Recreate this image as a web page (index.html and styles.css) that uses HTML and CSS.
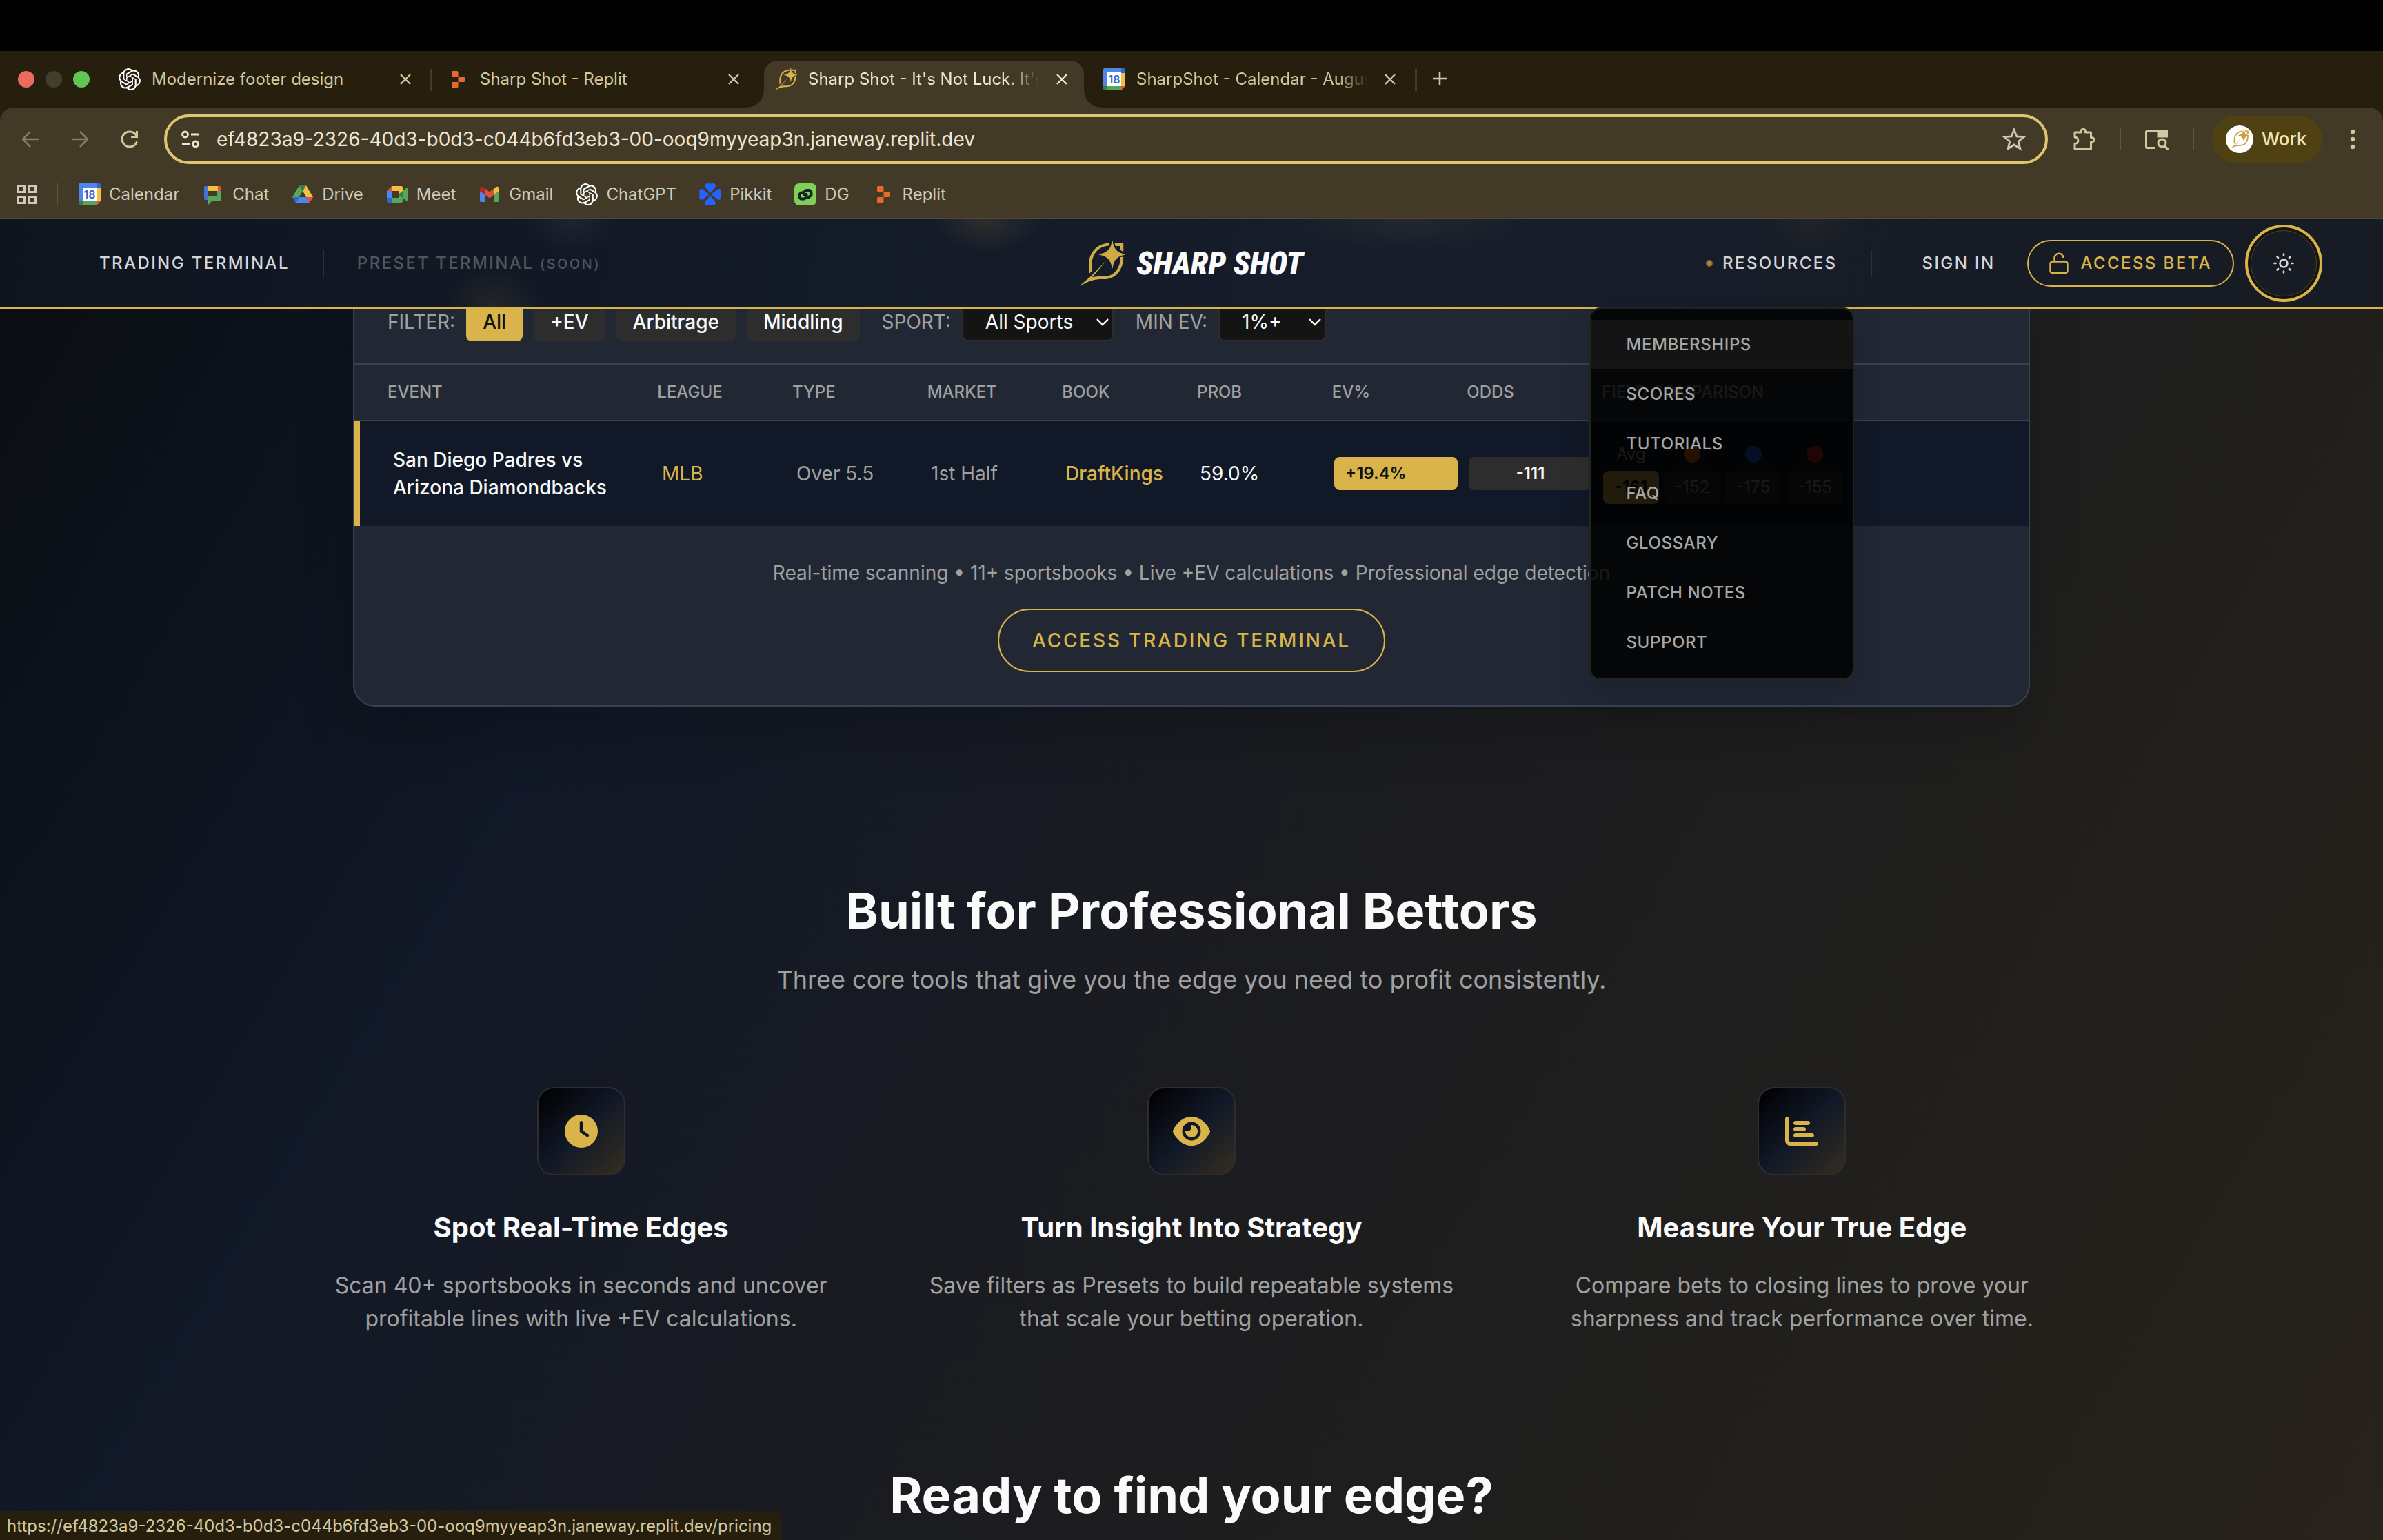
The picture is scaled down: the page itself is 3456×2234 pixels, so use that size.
FILE: index.html
```html
<!DOCTYPE html>
<html lang="en">
<head>
<meta charset="utf-8">
<meta name="viewport" content="width=device-width, initial-scale=1">
<title>Sharp Shot - It's Not Luck. It's Sharp.</title>
<link rel="stylesheet" href="styles.css">
</head>
<body>
<svg class="symbols" aria-hidden="true">
  <symbol id="i-close" viewBox="0 0 16 16"><path d="M1 1 15 15M15 1 1 15" fill="none" stroke="currentColor" stroke-width="2.4"/></symbol>
  <symbol id="i-gpt" viewBox="0 0 24 24"><path fill="#fff" d="M22.2819 9.8211a5.9847 5.9847 0 0 0-.5157-4.9108 6.0462 6.0462 0 0 0-6.5098-2.9A6.0651 6.0651 0 0 0 4.9807 4.1818a5.9847 5.9847 0 0 0-3.9977 2.9 6.0462 6.0462 0 0 0 .7427 7.0966 5.98 5.98 0 0 0 .511 4.9107 6.051 6.051 0 0 0 6.5146 2.9001A5.9847 5.9847 0 0 0 13.2599 24a6.0557 6.0557 0 0 0 5.7718-4.2058 5.9894 5.9894 0 0 0 3.9977-2.9001 6.0557 6.0557 0 0 0-.7475-7.0729zm-9.022 12.6081a4.4755 4.4755 0 0 1-2.8764-1.0408l.1419-.0804 4.7783-2.7582a.7948.7948 0 0 0 .3927-.6813v-6.7369l2.02 1.1686a.071.071 0 0 1 .038.052v5.5826a4.504 4.504 0 0 1-4.4945 4.4944zm-9.6607-4.1254a4.4708 4.4708 0 0 1-.5346-3.0137l.142.0852 4.783 2.7582a.7712.7712 0 0 0 .7806 0l5.8428-3.3685v2.3324a.0804.0804 0 0 1-.0332.0615L9.74 19.9502a4.4992 4.4992 0 0 1-6.1408-1.6464zM2.3408 7.8956a4.485 4.485 0 0 1 2.3655-1.9728V11.6a.7664.7664 0 0 0 .3879.6765l5.8144 3.3543-2.0201 1.1685a.0757.0757 0 0 1-.071 0l-4.8303-2.7865A4.504 4.504 0 0 1 2.3408 7.872zm16.5963 3.8558L13.1038 8.364 15.1192 7.2a.0757.0757 0 0 1 .071 0l4.8303 2.7913a4.4944 4.4944 0 0 1-.6765 8.1042v-5.6772a.79.79 0 0 0-.407-.667zm2.0107-3.0231l-.142-.0852-4.7735-2.7818a.7759.7759 0 0 0-.7854 0L9.409 9.2297V6.8974a.0662.0662 0 0 1 .0284-.0615l4.8303-2.7866a4.4992 4.4992 0 0 1 6.6802 4.66zM8.3065 12.863l-2.02-1.1638a.0804.0804 0 0 1-.038-.0567V6.0742a4.4992 4.4992 0 0 1 7.3757-3.4537l-.142.0805L8.704 5.459a.7948.7948 0 0 0-.3927.6813zm1.0976-2.3654l2.602-1.4998 2.6069 1.4998v2.9994l-2.5974 1.4997-2.6067-1.4997Z"/></symbol>
  <symbol id="i-replit" viewBox="0 0 32 32"><path fill="#e56a2b" d="M7 5.500a1.500 1.500 0 0 1 1.500-1.500H15a1.500 1.500 0 0 1 1.500 1.500V12H8.500A1.500 1.500 0 0 1 7 10.500ZM16.500 12H24.500A1.500 1.500 0 0 1 26 13.500V18.500A1.500 1.500 0 0 1 24.500 20H16.500ZM7 21.500A1.500 1.500 0 0 1 8.500 20H16.500V26.500A1.500 1.500 0 0 1 15 28H8.500A1.500 1.500 0 0 1 7 26.500Z"/></symbol>
  <symbol id="i-cal" viewBox="0 0 32 32"><path fill="#4f86ec" d="M0 2a2 2 0 0 1 2-2H26V7H7V26H0Z"/><path fill="#2f66cf" d="M26 0h4a2 2 0 0 1 2 2v5h-6Z"/><path fill="#f3bf42" d="M26 7h6v19h-6Z"/><path fill="#58a65c" d="M6 26h20v6H6Z"/><path fill="#3b7d43" d="M0 26h6v6H2a2 2 0 0 1-2-2Z"/><path fill="#e0503f" d="M26 26h6l-6 6Z"/><path fill="#fff" d="M6 6h20v20H6Z"/><text x="16" y="22" text-anchor="middle" class="cal-day">18</text></symbol>
  <symbol id="i-mark" viewBox="195 120 192 192"><g fill="currentColor"><path d="M233 260V222C233 168 270 131 321 130L319 142C275 144 246 176 246 222V250Z"/><path d="M342 130H379V167L366 160V143H345Z"/><path d="M366 190L379 188C379 245 345 283 298 283C265 282 240 285 195 312C215 291 240 275 250 262L309 203L247 275C262 270 280 271 298 271C338 271 366 240 366 190Z"/><path d="M332 120Q336 172 386 178Q336 186 332 236Q328 186 276 178Q328 172 332 120Z" stroke="currentColor" stroke-width="3"/></g></symbol>
</svg>

<div class="browser">
  <div class="menubar"></div>

  <div class="tabstrip">
    <div class="lights"><i class="red"></i><i></i><i class="green"></i></div>
    <div class="tab"><svg class="ico"><use href="#i-gpt"/></svg><span class="tab-title">Modernize footer design</span><button class="tab-x" aria-label="Close tab"><svg><use href="#i-close"/></svg></button></div>
    <div class="tab"><svg class="ico"><use href="#i-replit"/></svg><span class="tab-title">Sharp Shot - Replit</span><button class="tab-x" aria-label="Close tab"><svg><use href="#i-close"/></svg></button></div>
    <div class="tab active"><svg class="ico gold"><use href="#i-mark"/></svg><span class="tab-title faded">Sharp Shot - It's Not Luck. It's Sharp.</span><button class="tab-x" aria-label="Close tab"><svg><use href="#i-close"/></svg></button></div>
    <div class="tab"><svg class="ico"><use href="#i-cal"/></svg><span class="tab-title faded">SharpShot - Calendar - August 2025</span><button class="tab-x" aria-label="Close tab"><svg><use href="#i-close"/></svg></button></div>
    <button class="new-tab" aria-label="New tab"><svg viewBox="0 0 22 22"><path d="M11 1V21M1 11H21" stroke="currentColor" stroke-width="2.600"/></svg></button>
  </div>

  <div class="chrome">
    <div class="toolbar">
      <button class="tool dim" aria-label="Back"><svg viewBox="0 0 32 32"><path d="M28 16H5M16 5 5 16 16 27" fill="none" stroke="currentColor" stroke-width="2.600"/></svg></button>
      <button class="tool dim" aria-label="Forward"><svg viewBox="0 0 32 32"><path d="M4 16H27M16 5 27 16 16 27" fill="none" stroke="currentColor" stroke-width="2.600"/></svg></button>
      <button class="tool" aria-label="Reload"><svg viewBox="0 0 32 32"><path d="M26.500 19.500A11 11 0 1 1 25 9.500L27 12" fill="none" stroke="currentColor" stroke-width="3"/><path d="M28 4V14H18V11H25V4Z" fill="currentColor"/></svg></button>
      <form class="omnibox">
        <svg class="site" viewBox="0 0 28 28"><g fill="none" stroke="currentColor" stroke-width="2.800"><circle cx="6.500" cy="7" r="4"/><path d="M15 7H26M2 21H13"/><circle cx="21.500" cy="21" r="4"/></g></svg>
        <input type="text" aria-label="Address" value="ef4823a9-2326-40d3-b0d3-c044b6fd3eb3-00-ooq9myyeap3n.janeway.replit.dev">
        <button type="button" aria-label="Bookmark this page"><svg viewBox="0 0 32 32"><path d="M16 3 19.600 12.200 29.500 12.800 21.900 19.100 24.300 28.800 16 23.500 7.700 28.800 10.100 19.100 2.500 12.800 12.400 12.200Z" fill="none" stroke="currentColor" stroke-width="2.600"/></svg></button>
      </form>
      <div class="tools-end">
        <button class="tool" aria-label="Extensions"><svg viewBox="0 0 36 36"><path d="M5 8H14C14 1.500 20.500 1.500 20.500 8H28.500V15.500C34.500 15.500 34.500 22 28.500 22V32H5V24.500C11.500 24.500 11.500 15 5 15Z" fill="none" stroke="currentColor" stroke-width="3" stroke-linejoin="round"/></svg></button>
        <i class="bar"></i>
        <button class="tool" aria-label="Search tabs"><svg viewBox="0 0 36 36"><path d="M15 30.500H4.500A2 2 0 0 1 2.500 28.500V7.500A2 2 0 0 1 4.500 5.500H32.500V14H20V5.500" fill="none" stroke="currentColor" stroke-width="3"/><path d="M20 5H33V14H20Z" fill="currentColor"/><circle cx="25.500" cy="23.500" r="5.500" fill="none" stroke="currentColor" stroke-width="3"/><path d="M29.500 28 34.500 33" stroke="currentColor" stroke-width="3.200"/></svg></button>
        <i class="bar"></i>
        <button class="profile"><span class="avatar"><svg><use href="#i-mark"/></svg></span>Work</button>
        <button class="tool more" aria-label="Menu"><svg viewBox="0 0 36 36"><g fill="currentColor"><circle cx="18" cy="7" r="3.200"/><circle cx="18" cy="18" r="3.200"/><circle cx="18" cy="29" r="3.200"/></g></svg></button>
      </div>
    </div>
    <nav class="bookmarks" aria-label="Bookmarks">
      <button class="apps" aria-label="Apps"><svg viewBox="0 0 30 30"><g fill="none" stroke="currentColor" stroke-width="3"><path d="M2.500 2.500H11.500V11.500H2.500ZM18.500 2.500H27.500V11.500H18.500ZM2.500 18.500H11.500V27.500H2.500ZM18.500 18.500H27.500V27.500H18.500Z"/></g></svg></button>
      <i class="bar"></i>
      <a href="#cal"><svg class="ico"><use href="#i-cal"/></svg>Calendar</a>
      <a href="#chat"><svg class="ico" viewBox="0 0 32 32"><path fill="#f3bf42" d="M9 4H24V11H9Z"/><path fill="#4472d6" d="M3 6A2 2 0 0 1 5 4H9V24H5A2 2 0 0 1 3 22Z"/><path fill="#e0503f" d="M23 4H26A2 2 0 0 1 28 6V11H23Z"/><path fill="#58a65c" d="M22 11H28V23A2 2 0 0 1 26 25H15L9 31V19H22Z"/></svg>Chat</a>
      <a href="#drive"><svg class="ico" viewBox="0 0 32 32"><path fill="#58a65c" d="M11 3 16 11 6 28 1 20Z"/><path fill="#3b7d43" d="M11 3H21L16 11Z"/><path fill="#f3bf42" d="M21 3 31 20H21L16 11Z"/><path fill="#4f86ec" d="M11 20H21L26 28H6Z"/><path fill="#2f66cf" d="M1 20H11L6 28Z"/><path fill="#e0503f" d="M21 20H31L26 28Z"/></svg>Drive</a>
      <a href="#meet"><svg class="ico" viewBox="0 0 32 32"><path fill="#e0503f" d="M1 11 8 4V11Z"/><path fill="#4f86ec" d="M1 11H8V21H1Z"/><path fill="#2f66cf" d="M1 21H8V28H3A2 2 0 0 1 1 26Z"/><path fill="#f3bf42" d="M8 4H22A2 2 0 0 1 24 6V12L18 16V11H8Z"/><path fill="#58a65c" d="M8 21H18V16L24 20V26A2 2 0 0 1 22 28H8Z"/><path fill="#3b7d43" d="M18 16 24 11V21Z"/><path fill="#58a65c" d="M24 11 29 7A1 1 0 0 1 31 8V24A1 1 0 0 1 29 25L24 21Z"/></svg>Meet</a>
      <a href="#gmail"><svg class="ico" viewBox="0 0 32 32"><path fill="#4f86ec" d="M2 11 9 16V27H4A2 2 0 0 1 2 25Z"/><path fill="#58a65c" d="M23 16 30 11V25A2 2 0 0 1 28 27H23Z"/><path fill="#e0503f" d="M9 7 16 12.500 23 7V16L16 21.500 9 16Z"/><path fill="#b3261e" d="M2 8C2 5 5 4 7 5.500L9 7V16L2 11Z"/><path fill="#f3bf42" d="M30 8C30 5 27 4 25 5.500L23 7V16L30 11Z"/></svg>Gmail</a>
      <a href="#gpt"><svg class="ico"><use href="#i-gpt"/></svg>ChatGPT</a>
      <a href="#pikkit"><svg class="ico" viewBox="0 0 32 32"><g fill="#2563ff"><path id="leaf" d="M16 14.500 8.500 5C7 2 10 -1 13 .5 14.500 0 16 1 16 1S17.500 0 19 .5C22 -1 25 2 23.500 5Z"/><use href="#leaf" transform="rotate(90 16 16)"/><use href="#leaf" transform="rotate(180 16 16)"/><use href="#leaf" transform="rotate(270 16 16)"/></g></svg>Pikkit</a>
      <a href="#dg"><svg class="ico" viewBox="0 0 32 32"><rect width="32" height="32" rx="7" fill="#80cf5a"/><path d="M18 20.500H20.500L24.500 17V12.500L22 10H17L14 12.500V16H17.500V20L14.500 22.500H9.500L7 20V16.500L10 13.500H12" fill="none" stroke="#172424" stroke-width="4" stroke-linejoin="round" stroke-linecap="round"/></svg>DG</a>
      <a href="#replit"><svg class="ico"><use href="#i-replit"/></svg>Replit</a>
    </nav>
  </div>

  <div class="page">
    <header class="site-header">
      <nav class="nav-left">
        <a href="#terminal">TRADING TERMINAL</a>
        <i class="rule"></i>
        <span class="soon">PRESET TERMINAL <small>(SOON)</small></span>
      </nav>
      <a class="logo" href="#home"><svg><use href="#i-mark"/></svg><span>SHARP SHOT</span></a>
      <nav class="nav-right">
        <div class="resources">
          <a href="#resources"><i class="spark"></i>RESOURCES</a>
          <ul class="menu">
            <li><a class="hover" href="#pricing">MEMBERSHIPS</a></li>
            <li><a href="#scores">SCORES</a></li>
            <li><a href="#tutorials">TUTORIALS</a></li>
            <li><a href="#faq">FAQ</a></li>
            <li><a href="#glossary">GLOSSARY</a></li>
            <li><a href="#notes">PATCH NOTES</a></li>
            <li><a href="#support">SUPPORT</a></li>
          </ul>
        </div>
        <i class="rule"></i>
        <a class="sign-in" href="#signin">SIGN IN</a>
        <button class="beta"><svg viewBox="0 0 28 32"><g fill="none" stroke="currentColor" stroke-width="2.400"><rect x="1.500" y="13.500" width="25" height="16.500" rx="3"/><path d="M7.500 13.500V8.500A6.500 6.500 0 0 1 20.500 8"/></g></svg>ACCESS BETA</button>
        <button class="theme" aria-label="Toggle theme"><svg viewBox="0 0 32 32"><g fill="none" stroke="currentColor" stroke-width="2.600" stroke-linecap="round"><circle cx="16" cy="16" r="5.500"/><path d="M16 2.500V4.500M16 27.500V29.500M2.500 16H4.500M27.500 16H29.500M6.500 6.500 8 8M24 24 25.500 25.500M25.500 6.500 24 8M8 24 6.500 25.500"/></g></svg></button>
      </nav>
    </header>

    <main>
      <section class="card">
        <div class="filters">
          <span class="label">FILTER:</span>
          <div class="chips">
            <button class="chip on">All</button><button class="chip">+EV</button><button class="chip">Arbitrage</button><button class="chip">Middling</button>
          </div>
          <label class="label" for="sport">SPORT:</label>
          <span class="pick"><select id="sport" class="wide"><option>All Sports</option></select><svg viewBox="0 0 18 12"><path d="M1 2 9 10 17 2" fill="none" stroke="currentColor" stroke-width="2.400"/></svg></span>
          <label class="label" for="minev">MIN EV:</label>
          <span class="pick"><select id="minev"><option>1%+</option></select><svg viewBox="0 0 18 12"><path d="M1 2 9 10 17 2" fill="none" stroke="currentColor" stroke-width="2.400"/></svg></span>
        </div>
        <table class="odds">
          <thead><tr><th class="two">EVENT</th><th>LEAGUE</th><th>TYPE</th><th>MARKET</th><th>BOOK</th><th>PROB</th><th>EV%</th><th>ODDS</th><th class="two">FIELD COMPARISON</th></tr></thead>
          <tbody><tr>
            <td class="two event">San Diego Padres vs Arizona Diamondbacks</td>
            <td class="amber">MLB</td><td>Over 5.5</td><td>1st Half</td><td class="amber strong">DraftKings</td><td class="white">59.0%</td>
            <td class="pill ev">+19.4%</td><td class="pill price">-111</td>
            <td class="two"><div class="field">
              <span class="avg">Avg</span><i class="dot orange"></i><i class="dot blue"></i><i class="dot scarlet"></i>
              <b class="best">-161</b><b>-152</b><b>-175</b><b>-155</b>
            </div></td>
          </tr></tbody>
        </table>
        <div class="card-foot">
          <p>Real-time scanning • 11+ sportsbooks • Live +EV calculations • Professional edge detection</p>
          <button class="cta">ACCESS TRADING TERMINAL</button>
        </div>
      </section>

      <section class="tools">
        <h2>Built for Professional Bettors</h2>
        <p class="lead">Three core tools that give you the edge you need to profit consistently.</p>
        <div class="grid">
          <article>
            <div class="tile"><svg viewBox="0 0 512 512"><path d="M256 0a256 256 0 1 1 0 512A256 256 0 1 1 256 0zM232 120V256c0 8 4 15.500 10.700 20l96 64c11 7.400 25.900 4.400 33.300-6.700s4.400-25.900-6.700-33.300L280 243.200V120c0-13.300-10.700-24-24-24s-24 10.700-24 24z"/></svg></div>
            <h3>Spot Real-Time Edges</h3>
            <p>Scan 40+ sportsbooks in seconds and uncover profitable lines with live +EV calculations.</p>
          </article>
          <article>
            <div class="tile"><svg viewBox="0 0 576 512"><path d="M288 32c-80.800 0-145.500 36.800-192.600 80.600C48.600 156 17.300 208 2.500 243.700c-3.300 7.900-3.300 16.700 0 24.600C17.300 304 48.600 356 95.400 399.400C142.500 443.200 207.200 480 288 480s145.500-36.800 192.600-80.600c46.800-43.500 78.100-95.400 93-131.100c3.300-7.900 3.300-16.700 0-24.600c-14.900-35.700-46.200-87.700-93-131.100C433.500 68.800 368.800 32 288 32zM144 256a144 144 0 1 1 288 0 144 144 0 1 1 -288 0zm144-64c0 35.300-28.700 64-64 64c-7.100 0-13.900-1.200-20.300-3.300c-5.500-1.800-11.900 1.600-11.700 7.400c.3 6.900 1.300 13.800 3.200 20.700c13.700 51.200 66.400 81.600 117.600 67.900s81.600-66.400 67.900-117.600c-11.100-41.500-47.800-69.400-88.600-71.100c-5.800-.2-9.200 6.100-7.400 11.700c2.100 6.400 3.300 13.200 3.300 20.300z"/></svg></div>
            <h3>Turn Insight Into Strategy</h3>
            <p>Save filters as Presets to build repeatable systems that scale your betting operation.</p>
          </article>
          <article>
            <div class="tile"><svg viewBox="0 0 512 512"><path d="M32 32c17.700 0 32 14.300 32 32V400c0 8.800 7.200 16 16 16H480c17.700 0 32 14.300 32 32s-14.300 32-32 32H80c-44.200 0-80-35.800-80-80V64C0 46.300 14.300 32 32 32zm96 96c0-17.700 14.300-32 32-32l192 0c17.700 0 32 14.300 32 32s-14.300 32-32 32l-192 0c-17.700 0-32-14.300-32-32zm32 64H288c17.700 0 32 14.300 32 32s-14.300 32-32 32H160c-17.700 0-32-14.300-32-32s14.300-32 32-32zm0 96H416c17.700 0 32 14.300 32 32s-14.300 32-32 32H160c-17.700 0-32-14.300-32-32s14.300-32 32-32z"/></svg></div>
            <h3>Measure Your True Edge</h3>
            <p>Compare bets to closing lines to prove your sharpness and track performance over time.</p>
          </article>
        </div>
      </section>

      <section class="ready"><h2>Ready to find your edge?</h2></section>
    </main>
    <div class="status">https://ef4823a9-2326-40d3-b0d3-c044b6fd3eb3-00-ooq9myyeap3n.janeway.replit.dev/pricing</div>
  </div>
</div>
</body>
</html>
```
FILE: styles.css
```css
:root {
  --gold: #d8b44a;
  --strip: #261f0e;
  --chrome: #423a26;
  --sand: #d3c7a0;
  --muted: #a0a0a0;
  --panel: #212834;
  --line: #384152;
}

* { box-sizing: border-box; }

body {
  margin: 0;
  background: #000;
  color: #fafafa;
  font-family: Inter, "Liberation Sans", sans-serif;
  font-size: 28px;
  line-height: 40px;
}

h2, h3, p, ul { margin: 0; padding: 0; }
a { color: inherit; text-decoration: none; }
button, input, select { font: inherit; color: inherit; }
button { margin: 0; padding: 0; border: 0; background: none; }
svg { display: block; flex: none; }
i { font-style: normal; }

.symbols { position: absolute; width: 0; height: 0; }
.cal-day { font: 600 16px Inter, sans-serif; fill: #2f66cf; }

.browser { display: flex; flex-direction: column; height: 100vh; }
.menubar { flex: none; height: 74px; }

/* Tab strip */
.tabstrip {
  display: flex;
  flex: none;
  height: 82px;
  background: var(--strip);
  color: var(--sand);
  font-size: 24px;
}
.lights { display: flex; gap: 16px; width: 150px; padding: 29px 0 0 26px; }
.lights i { width: 24px; height: 24px; border-radius: 50%; background: #423d2e; }
.lights .red { background: #ee6a5f; }
.lights .green { background: #62c655; }
.tab {
  position: relative;
  display: flex;
  align-items: center;
  width: 476px;
  height: 68px;
  margin-top: 14px;
  padding: 0 22px 14px;
}
.tab:not(.active):not(:has(+ .active))::after {
  content: "";
  position: absolute;
  right: -1px;
  top: 12px;
  width: 3px;
  height: 32px;
  background: #443c28;
}
.ico { width: 32px; height: 32px; }
.tab .ico { margin-right: 16px; }
.gold { color: var(--gold); }
.tab-title { flex: 1; overflow: hidden; white-space: nowrap; }
.faded { -webkit-mask-image: linear-gradient(90deg, #000 290px, transparent 336px); mask-image: linear-gradient(90deg, #000 290px, transparent 336px); }
.tab-x { display: grid; place-items: center; width: 32px; height: 32px; }
.tab-x svg { width: 16px; height: 16px; }
.active { color: #f0e6c9; }
.active::before {
  content: "";
  position: absolute;
  inset: 0 6px;
  border-radius: 20px 20px 0 0;
  background: var(--chrome);
}
.active::after {
  content: "";
  position: absolute;
  inset: auto -18px 0;
  height: 24px;
  background:
    radial-gradient(circle at 0 0, transparent 23px, var(--chrome) 24px) left / 24px 24px no-repeat,
    radial-gradient(circle at 100% 0, transparent 23px, var(--chrome) 24px) right / 24px 24px no-repeat;
}
.active > * { position: relative; }
.new-tab { display: grid; place-items: center; width: 68px; height: 80px; }
.new-tab svg { width: 22px; height: 22px; }

/* Toolbar */
.chrome { flex: none; background: linear-gradient(var(--strip), var(--strip)); border-bottom: 2px solid #4c4740; }
.toolbar {
  display: flex;
  align-items: center;
  height: 92px;
  padding: 0 16px 0 8px;
  border-radius: 20px 20px 0 0;
  background: var(--chrome);
  color: var(--sand);
}
.tool { display: grid; place-items: center; width: 72px; height: 72px; }
.tool svg { width: 32px; height: 32px; }
.tools-end .tool svg { width: 36px; height: 36px; }
.dim { color: #857c64; }
.omnibox {
  display: flex;
  flex: 1;
  align-items: center;
  gap: 24px;
  height: 72px;
  margin: 0 16px 0 14px;
  padding: 0 28px 0 20px;
  border: 4px solid #dfc56f;
  border-radius: 36px;
  color: #f0e6d2;
}
.site { width: 28px; height: 28px; }
.omnibox input { flex: 1; min-width: 0; padding: 0; border: 0; outline: 0; background: none; }
.omnibox button { color: #d0c8b8; }
.omnibox button svg { width: 34px; height: 34px; }
.tools-end { display: flex; align-items: center; gap: 16px; }
.bar { width: 2px; height: 32px; background: #5f563d; }
.profile {
  display: flex;
  align-items: center;
  gap: 12px;
  width: 160px;
  height: 68px;
  margin-left: 10px;
  padding-left: 20px;
  border-radius: 34px;
  background: #4f4111;
  color: #f3e3b3;
  font-size: 26px;
  font-weight: 500;
}
.avatar { display: grid; place-items: center; width: 40px; height: 40px; border-radius: 50%; background: #fff; color: #c9a23c; }
.avatar svg { width: 28px; height: 28px; }
.more { width: 56px; }

.bookmarks {
  display: flex;
  align-items: center;
  height: 68px;
  padding: 0 24px;
  background: var(--chrome);
  color: #d0c8b8;
  font-size: 24px;
}
.apps svg { width: 30px; height: 30px; }
.bookmarks .bar { margin: 0 30px 0 28px; }
.bookmarks a { display: flex; align-items: center; gap: 12px; margin-right: 33px; }

/* Site */
.page {
  position: relative;
  flex: 1;
  min-height: 0;
  overflow: hidden;
  background: linear-gradient(121deg, #0a0d12 0, #111827 27%, #1b1c20 54%, #201f1d 75%, #28231b 100%);
}
.site-header {
  position: relative;
  z-index: 2;
  display: grid;
  grid-template-columns: 1fr auto 1fr;
  align-items: center;
  height: 130px;
  padding: 0 88px;
  border-bottom: 2px solid var(--gold);
  background:
    radial-gradient(70px 50px at 24% 0, rgba(255, 255, 255, .05), transparent),
    radial-gradient(80px 50px at 41.4% 0, rgba(216, 180, 74, .13), transparent),
    radial-gradient(180px 50px at 59% 0, rgba(216, 180, 74, .07), transparent),
    radial-gradient(70px 50px at 76% 0, rgba(216, 180, 74, .05), transparent),
    radial-gradient(70px 60px at 20.7% 100%, rgba(216, 180, 74, .09), transparent),
    linear-gradient(100deg, #0f151f, #131a28 35%, #171d2b 65%, #171b24 85%);
  color: #d4d6da;
  font-size: 24px;
  font-weight: 500;
  letter-spacing: .1em;
}
.nav-left, .nav-right { display: flex; align-items: center; }
.nav-left { padding-left: 56px; gap: 48px; }
.rule { width: 2px; height: 40px; background: #2b303b; }
.soon { color: #52555f; }
.soon small { font-size: 20px; }
.logo { display: flex; align-items: center; gap: 16px; }
.logo svg { width: 66px; height: 66px; color: #cfab48; }
.logo span {
  font: italic 900 46px/48px "Roboto Condensed", "Open Sans Condensed", Roboto, sans-serif;
  letter-spacing: 0;
  color: #fafafa;
}
.nav-right { justify-content: flex-end; }
.resources { position: relative; margin-right: 48px; }
.resources > a { display: flex; align-items: center; gap: 14px; }
.spark { width: 10px; height: 10px; border-radius: 50%; background: radial-gradient(#c79a3a, #5d4a22); }
.menu {
  position: absolute;
  top: 84px;
  right: -24px;
  width: 384px;
  padding: 16px 0;
  border: 2px solid #22231f;
  border-radius: 16px;
  background: rgba(0, 0, 0, .85);
  background-clip: padding-box;
  box-shadow: 0 20px 40px rgba(0, 0, 0, .15);
  color: #a6a6a6;
  letter-spacing: .025em;
  list-style: none;
}
.menu a { display: block; padding: 16px 52px; }
.menu .hover { background: rgba(46, 46, 44, .38); }
.sign-in { margin: 0 46px 0 73px; }
.beta {
  display: flex;
  align-items: center;
  gap: 18px;
  height: 68px;
  padding: 0 30px;
  border: 2px solid var(--gold);
  border-radius: 34px;
  color: var(--gold);
  letter-spacing: .1em;
}
.beta svg { width: 28px; height: 32px; }
.theme {
  display: grid;
  place-items: center;
  width: 112px;
  height: 112px;
  margin-left: 16px;
  border: 4px solid var(--gold);
  border-radius: 50%;
  box-shadow: inset 0 0 0 4px #15150f, inset 0 0 0 5px #4a4028;
}
.theme svg { width: 32px; height: 32px; }

main { padding: 0 64px; }

/* Odds card */
.card {
  max-width: 2432px;
  margin: -43px auto 0;
  border: 2px solid var(--line);
  border-radius: 32px;
  background: var(--panel);
  box-shadow: 0 40px 80px rgba(0, 0, 0, .18);
  overflow: hidden;
}
.filters { display: flex; align-items: center; gap: 16px; padding: 32px 48px; border-bottom: 2px solid var(--line); }
.label { color: var(--muted); }
.chips { display: flex; gap: 16px; margin-right: 16px; }
.chip { padding: 8px 24px; border-radius: 8px; background: #2d2d2d; font-weight: 500; }
.chip.on { background: var(--gold); color: #111; }
.pick { display: grid; align-items: center; margin-right: 16px; }
.pick > * { grid-area: 1 / 1; }
.pick svg { justify-self: end; width: 18px; height: 12px; margin-right: 7px; pointer-events: none; }
select {
  width: 156px;
  height: 56px;
  padding: 0 32px;
  border: 2px solid #2d2d2d;
  border-radius: 8px;
  background: #141414;
  appearance: none;
}
select.wide { width: 220px; }

.odds { display: block; }
.odds thead, .odds tbody { display: block; }
.odds tr {
  display: grid;
  grid-template-columns: repeat(12, 1fr);
  align-items: center;
  gap: 16px;
  padding: 24px 48px;
}
.odds th, .odds td { padding: 0; text-align: left; }
.odds th { color: var(--muted); font-size: 24px; font-weight: 500; line-height: 32px; white-space: nowrap; }
.odds thead tr { border-bottom: 2px solid var(--line); }
.odds tbody tr { padding: 32px 48px; border-left: 8px solid var(--gold); background: #111827; color: var(--muted); }
.two { grid-column: span 2; }
.odds .event { max-width: 340px; color: #fafafa; font-weight: 500; }
.amber { color: var(--gold); }
.strong { font-weight: 500; }
.white { color: #fafafa; }
.odds .pill { padding: 8px 16px; border-radius: 8px; font-size: 24px; font-weight: 600; line-height: 32px; }
.ev { background: var(--gold); color: #111; }
.odds .price { background: #2d2d2d; color: #fafafa; text-align: center; }
.field {
  display: grid;
  grid-template-columns: repeat(4, 1fr);
  gap: 8px;
  max-width: 347px;
  place-items: center stretch;
  font-size: 24px;
  line-height: 32px;
  text-align: center;
}
.dot { justify-self: center; width: 24px; height: 24px; border-radius: 50%; }
.orange { background: #f97316; }
.blue { background: #2563eb; }
.scarlet { background: #dc2626; }
.field b { padding: 8px 0; border-radius: 8px; background: #2d2d2d; font-weight: 400; }
.field .best { background: var(--gold); color: #111; font-weight: 700; }

.card-foot { display: flex; flex-direction: column; align-items: center; gap: 32px; padding: 48px; color: var(--muted); }
.cta {
  height: 92px;
  padding: 0 48px;
  border: 2px solid var(--gold);
  border-radius: 46px;
  color: var(--gold);
  font-weight: 500;
  letter-spacing: .1em;
}

/* Feature columns */
.tools { max-width: 2560px; margin: 0 auto; padding-top: 256px; text-align: center; }
h2 { font-size: 72px; font-weight: 700; line-height: 80px; }
.lead { margin-top: 32px; color: var(--muted); font-size: 36px; line-height: 56px; }
.grid { display: grid; grid-template-columns: repeat(3, 1fr); gap: 96px; margin-top: 128px; }
.tile {
  display: grid;
  place-items: center;
  width: 128px;
  height: 128px;
  margin: 0 auto;
  border: 2px solid #2d2d2d;
  border-radius: 24px;
  background: linear-gradient(135deg, #000, #111827 50%, #352d20);
}
.tile svg { height: 48px; fill: var(--gold); }
h3 { margin-top: 48px; font-size: 40px; font-weight: 700; line-height: 56px; }
.grid p { max-width: 790px; margin: 32px auto 0; color: var(--muted); font-size: 32px; line-height: 48px; }
.ready { padding: 192px 0; text-align: center; }

.status {
  position: absolute;
  bottom: 0;
  left: 0;
  z-index: 3;
  padding: 2px 14px 0 10px;
  border-radius: 0 8px 0 0;
  background: var(--strip);
  color: var(--sand);
  font-size: 24px;
}
```
